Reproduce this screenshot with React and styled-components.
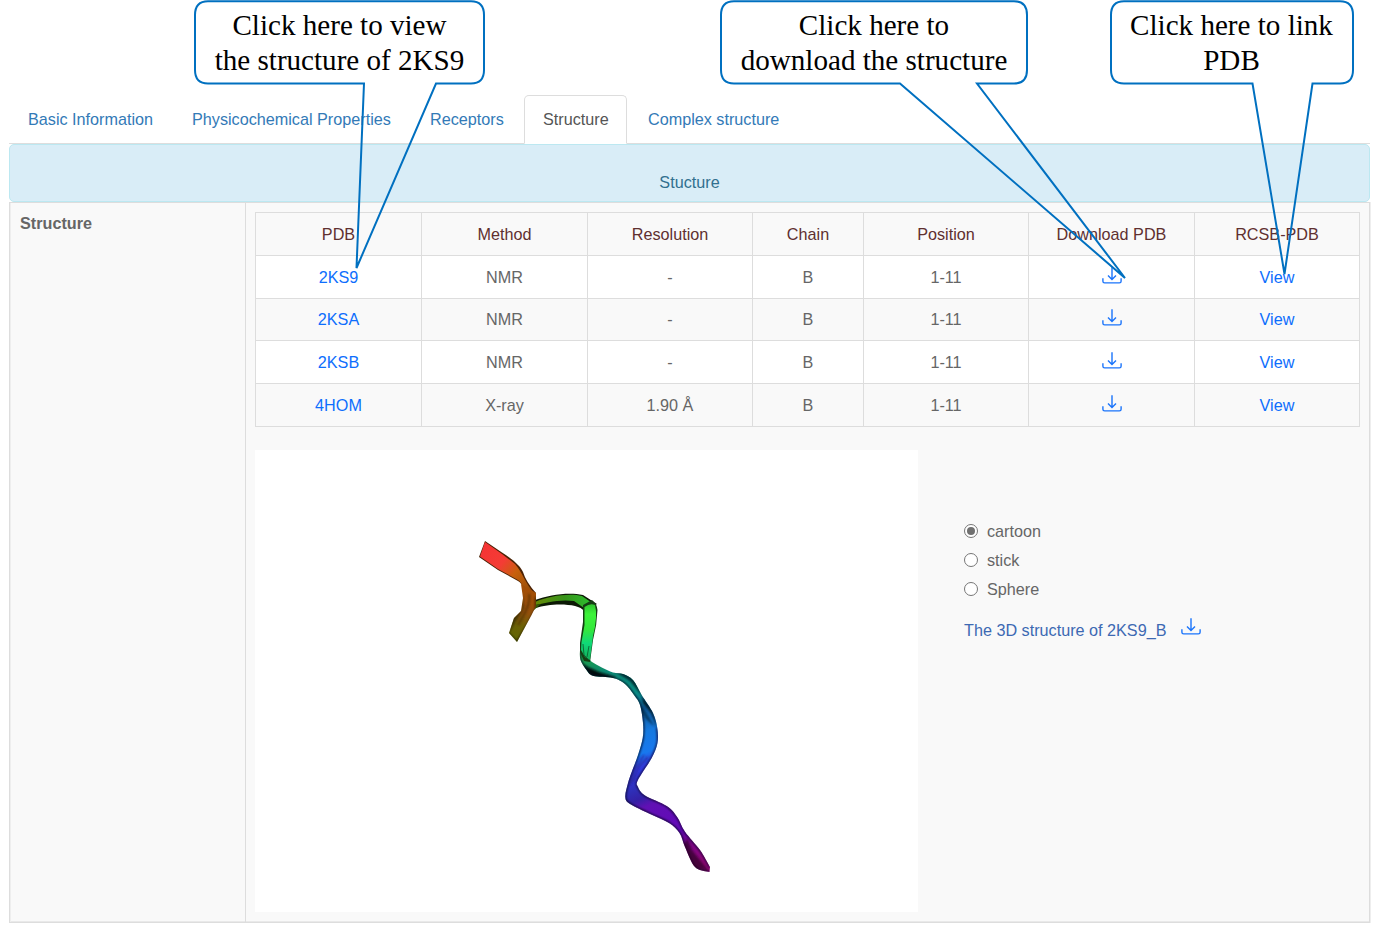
import React from 'react';
import styled, { createGlobalStyle } from 'styled-components';

const GlobalStyle = createGlobalStyle`
  * { box-sizing: border-box; }
  body {
    margin: 0;
    background: #fff;
    font-family: "Liberation Sans", Arial, sans-serif;
    font-size: 16.2px;
    color: #666;
  }
`;

const Page = styled.div`
  position: relative;
  width: 1377px;
  height: 937px;
  overflow: hidden;
  padding: 95px 7px 0 9px;
`;

const Tabs = styled.nav`
  display: flex;
  height: 49px;
  border-bottom: 1px solid #ddd;
`;

const Tab = styled.a`
  height: 49px;
  margin-right: 2px;
  padding: 0 18px;
  line-height: 47px;
  white-space: nowrap;
  text-align: center;
  width: ${(p) => p.$width}px;
  color: ${(p) => (p.$active ? '#555' : '#337ab7')};
  background: ${(p) => (p.$active ? '#fff' : 'transparent')};
  border: 1px solid ${(p) => (p.$active ? '#ddd' : 'transparent')};
  border-bottom-color: ${(p) => (p.$active ? '#fff' : 'transparent')};
  border-radius: 5px 5px 0 0;
`;

const Banner = styled.header`
  height: 58px;
  padding-top: 28px;
  line-height: 19px;
  text-align: center;
  color: #31708f;
  background: #d9edf7;
  border: 1px solid #bce8f1;
  border-radius: 5px;
`;

const Panel = styled.section`
  display: flex;
  height: 721px;
  background: #f9f9f9;
  border: 1px solid #ddd;
  box-shadow: inset 1px 0 #eee, inset 0 -1px #e9e9e9, 1px 0 #eee;
`;

const PanelLabel = styled.div`
  width: 236px;
  padding: 11px 10px;
  line-height: 19px;
  font-weight: 700;
  border-right: 1px solid #ddd;
`;

const PanelBody = styled.div`
  flex: 1;
  padding: 9px 9px 0 9px;
`;

const Table = styled.div`
  width: 1105px;
  border: solid #ddd;
  border-width: 1px 0 0 1px;
`;

const Row = styled.div`
  display: grid;
  grid-template-columns: 166px 166px 165px 111px 165px 166px 165px;
  height: ${(p) => p.$height}px;
  background: ${(p) => (p.$white ? '#fff' : '#f9f9f9')};
  color: ${(p) => (p.$head ? '#5f3030' : 'inherit')};
`;

const Cell = styled.div`
  display: flex;
  align-items: center;
  justify-content: center;
  border: solid #ddd;
  border-width: 0 1px 1px 0;
`;

const Link = styled.a`
  color: #0d6efd;
`;

const TrayIcon = styled.svg`
  display: block;
  width: 20px;
  height: 17px;
  fill: none;
  stroke: #1a74fb;
  stroke-width: 1.4;
  margin-bottom: 4px;
`;

const ViewerArea = styled.div`
  display: flex;
  margin-top: 23px;
`;

const Viewer = styled.div`
  width: 663px;
  height: 462px;
  background: #fff;

  svg { display: block; }
`;

const Controls = styled.div`
  padding: 67px 0 0 46px;
`;

const Option = styled.label`
  display: flex;
  align-items: center;
  height: 29px;
`;

const Radio = styled.span`
  display: grid;
  place-items: center;
  width: 14px;
  height: 14px;
  margin: 0 9px 2px 0;
  border: 1px solid #767676;
  border-radius: 50%;
  background: #fff;

  &::after {
    content: '';
    width: 8px;
    height: 8px;
    border-radius: 50%;
    background: ${(p) => (p.$on ? '#707070' : 'transparent')};
  }
`;

const Download = styled.a`
  display: flex;
  align-items: center;
  gap: 15px;
  height: 24px;
  margin-top: 14px;
  color: #3d69b3;

  svg { margin-bottom: 7px; }
`;

const Callout = styled.div`
  position: absolute;
  top: 0;
  left: ${(p) => p.$left}px;
  width: ${(p) => p.$width}px;
  padding-top: 8px;
  text-align: center;
  white-space: nowrap;
  font: 29.1px/35px "Liberation Serif", "Times New Roman", serif;
  color: #000;
`;

const Outline = styled.svg`
  position: absolute;
  top: 0;
  left: 0;
  overflow: visible;
  fill: none;
  stroke: #0070c0;
  stroke-width: 2;
`;

function DownloadIcon() {
  return (
    <TrayIcon viewBox="0 0 20 17">
      <path d="M.9 11.3v2.9q0 1.7 1.7 1.7h14.8q1.7 0 1.7-1.7v-2.9M10 .3v12M6 8.5l4 4 4-4" />
    </TrayIcon>
  );
}

function Bubble({ left, width, tail, children }) {
  const [a, b, tipX, tipY] = tail.map((v, i) => (i < 3 ? v - left : v));
  const r = width - 1;
  return (
    <Callout $left={left} $width={width}>
      <Outline width={width} height="84">
        <path
          strokeLinejoin="miter"
          strokeMiterlimit="3"
          d={`M${a} 83.5H14Q1 83.5 1 70V15Q1 1.2 14 1.2H${r - 13}Q${r} 1.2 ${r} 15V70Q${r} 83.5 ${r - 13} 83.5H${b}L${tipX} ${tipY}Z`}
        />
      </Outline>
      {children}
    </Callout>
  );
}

// Smooth cubic path through a list of points.
function curve(points) {
  let d = `M${points[0].join(' ')}`;
  for (let i = 0; i < points.length - 1; i += 1) {
    const p0 = points[Math.max(i - 1, 0)];
    const p1 = points[i];
    const p2 = points[i + 1];
    const p3 = points[Math.min(i + 2, points.length - 1)];
    const c1 = [p1[0] + (p2[0] - p0[0]) / 6, p1[1] + (p2[1] - p0[1]) / 6];
    const c2 = [p2[0] - (p3[0] - p1[0]) / 6, p2[1] - (p3[1] - p1[1]) / 6];
    d += `C${c1.join(' ')} ${c2.join(' ')} ${p2.join(' ')}`;
  }
  return d;
}

const CHAIN_RIGHT = [
  [588, 652], [590, 660], [599, 666], [613, 672.5], [623, 674], [633, 680], [641.7, 695],
  [653, 713], [657.3, 728], [657.5, 743], [651.7, 758], [638, 780], [638, 787], [645, 795.5],
  [666.7, 806], [677, 816.7], [685, 831.7], [700, 850], [710, 867],
];

const CHAIN_LEFT = [
  [709.5, 872], [695, 867], [685, 847], [679.5, 833], [669, 823], [650, 814], [630, 804],
  [625.3, 797], [628, 783], [631.7, 772], [638, 755], [642.7, 738], [643, 723], [640, 705],
  [634, 695], [625, 684], [613, 678], [593, 675.7], [586.5, 670], [580.5, 660], [580, 650],
];

const CHAIN = `${curve(CHAIN_RIGHT)}${curve(CHAIN_LEFT).replace('M', 'L')}Z`;

function Ribbon() {
  return (
    <svg width="663" height="462" viewBox="255 450 663 462">
      <defs>
        <linearGradient id="red" gradientUnits="userSpaceOnUse" x1="481" y1="549" x2="534" y2="594">
          <stop offset="0" stopColor="#f53434" />
          <stop offset=".36" stopColor="#f43c35" />
          <stop offset=".6" stopColor="#c7600c" />
          <stop offset="1" stopColor="#8b4a08" />
        </linearGradient>
        <linearGradient id="olive" gradientUnits="userSpaceOnUse" x1="530" y1="590" x2="514" y2="638">
          <stop offset="0" stopColor="#a34e06" />
          <stop offset=".45" stopColor="#91500b" />
          <stop offset=".72" stopColor="#6c6005" />
          <stop offset="1" stopColor="#626603" />
        </linearGradient>
        <linearGradient id="arch" gradientUnits="userSpaceOnUse" x1="535" y1="602" x2="595" y2="602">
          <stop offset="0" stopColor="#668a08" />
          <stop offset=".5" stopColor="#37941a" />
          <stop offset="1" stopColor="#2bc532" />
        </linearGradient>
        <linearGradient id="down" gradientUnits="userSpaceOnUse" x1="0" y1="602" x2="0" y2="663">
          <stop offset="0" stopColor="#2bb92b" />
          <stop offset=".2" stopColor="#3df43a" />
          <stop offset=".45" stopColor="#34e83c" />
          <stop offset=".68" stopColor="#0fd878" />
          <stop offset="1" stopColor="#16a451" />
        </linearGradient>
        <linearGradient id="chain" gradientUnits="userSpaceOnUse" x1="586" y1="655" x2="682" y2="871">
          <stop offset="0" stopColor="#1d9f45" />
          <stop offset=".1" stopColor="#0b8874" />
          <stop offset=".23" stopColor="#089188" />
          <stop offset=".31" stopColor="#0e5c99" />
          <stop offset=".4" stopColor="#1679df" />
          <stop offset=".48" stopColor="#1878ee" />
          <stop offset=".53" stopColor="#323bdf" />
          <stop offset=".61" stopColor="#2f2db5" />
          <stop offset=".65" stopColor="#3420a5" />
          <stop offset=".69" stopColor="#6110b4" />
          <stop offset=".84" stopColor="#6208b8" />
          <stop offset=".9" stopColor="#7c058b" />
          <stop offset="1" stopColor="#8d0676" />
        </linearGradient>
        <filter id="soft" x="-10%" y="-10%" width="120%" height="120%">
          <feGaussianBlur stdDeviation=".8" />
        </filter>
        <clipPath id="chainShape">
          <path d={CHAIN} />
        </clipPath>
        <clipPath id="bendShape">
          <path d="M521 584L536 593L536 606L531 616L517 642L509 633L514 618L521 611L523 598Z" />
        </clipPath>
      </defs>

      <path fill="#0c1905" d="M535 600C549 595 568 592 583 595L597 604L584 611C579 603 550 603 536 608Z" />
      <path fill="url(#arch)" d="M535 602C549 596 569 593 582 596L595 605L584 608L574 601C559 599 545 603 535 605Z" />
      <path fill="#315b08" d="M536 605L541 604L534 610L531 612Z" />

      <path fill="#4b2205" d="M485 541L502 552.500C514 560 521 567 523 572Q526 582 536 593L533 602C526 596 523 583 518 581L498 570L479 557Z" />
      <path fill="url(#red)" d="M485 542L502 554L515 564C523 573 525 583 534 593L530 599C525 593 523 583 518 580L498 569L480 556.500Z" />
      <path fill="url(#olive)" d="M521 584L536 593L536 606L531 616L517 642L509 633L514 618L521 611L523 598Z" />
      <g clipPath="url(#bendShape)">
        <g filter="url(#soft)">
          <path d="M523 594L524 608L514 624L509 633L509 620L522 609Z" fill="#241a02" opacity=".65" />
          <path d="M529 594C531 604 524 615 518 625" fill="none" stroke="#4a2803" strokeWidth="1.200" />
          <path d="M536 597L536 609L528 624L517 642L508 633" fill="none" stroke="#171002" strokeWidth="1.400" />
        </g>
      </g>

      <path fill="url(#chain)" d={CHAIN} />
      <g clipPath="url(#chainShape)">
        <g filter="url(#soft)">
          <path d="M580 662L588 667L599 672L616 677L610 681L590 680Z" fill="#000b0a" />
          <path d="M614 671L625 671L637 682L643 697L630 681Z" fill="#032f34" />
          <path d="M642 695L653 711L659 732L651 713L643 703Z" fill="#041a2c" />
          <path d="M636 697L642 706L655 727L646 719L641 709Z" fill="#062a4a" opacity=".75" />
          <path d={curve(CHAIN_LEFT)} stroke="#090a22" strokeWidth="1.800" fill="none" />
          <path d={curve(CHAIN_RIGHT.slice(8))} stroke="#120a2c" strokeWidth="1.700" fill="none" />
          <path d="M644 755L634 770L630 785M648 757L638 768L633 782" stroke="#2a2191" strokeWidth="1.200" fill="none" />
          <path d="M687 838L692 850L708 870L694 867L684 846Z" fill="#24051d" opacity=".65" />
        </g>
      </g>

      <path fill="#153e13" d="M583 605L592 600Q597 604 597.500 610Q597 625 593 640L590 662L584 661L580 652L580 643L583 622Z" />
      <path fill="url(#down)" d="M584.500 607Q590 603 595 605Q598 616 593 636L590 660L585 657L581 650L581.500 642L584.500 625Z" />
      <path d="M583 644L584 655L589 660M589 646L587 657" stroke="#0b6332" strokeWidth=".9" fill="none" />
    </svg>
  );
}

const TABS = [
  ['Basic Information', 162],
  ['Physicochemical Properties', 236],
  ['Receptors', 111],
  ['Structure', 103],
  ['Complex structure', 168],
];

const HEADINGS = ['PDB', 'Method', 'Resolution', 'Chain', 'Position', 'Download PDB', 'RCSB-PDB'];

const ENTRIES = [
  { id: '2KS9', method: 'NMR', resolution: '-', height: 43 },
  { id: '2KSA', method: 'NMR', resolution: '-', height: 42 },
  { id: '2KSB', method: 'NMR', resolution: '-', height: 43 },
  { id: '4HOM', method: 'X-ray', resolution: '1.90 Å', height: 43 },
];

export default function App() {
  return (
    <Page>
      <GlobalStyle />
      <Tabs>
        {TABS.map(([name, width]) => (
          <Tab key={name} $width={width} $active={name === 'Structure'}>{name}</Tab>
        ))}
      </Tabs>
      <Banner>Stucture</Banner>
      <Panel>
        <PanelLabel>Structure</PanelLabel>
        <PanelBody>
          <Table>
            <Row $head $height={43}>
              {HEADINGS.map((h) => <Cell key={h}>{h}</Cell>)}
            </Row>
            {ENTRIES.map((e, i) => (
              <Row key={e.id} $height={e.height} $white={i % 2 === 0}>
                <Cell><Link>{e.id}</Link></Cell>
                <Cell>{e.method}</Cell>
                <Cell>{e.resolution}</Cell>
                <Cell>B</Cell>
                <Cell>1-11</Cell>
                <Cell><DownloadIcon /></Cell>
                <Cell><Link>View</Link></Cell>
              </Row>
            ))}
          </Table>
          <ViewerArea>
            <Viewer><Ribbon /></Viewer>
            <Controls>
              {['cartoon', 'stick', 'Sphere'].map((name) => (
                <Option key={name}><Radio $on={name === 'cartoon'} />{name}</Option>
              ))}
              <Download>The 3D structure of 2KS9_B<DownloadIcon /></Download>
            </Controls>
          </ViewerArea>
        </PanelBody>
      </Panel>

      <Bubble left={194} width={291} tail={[364, 436, 356.5, 268]}>
        Click here to view<br />the structure of 2KS9
      </Bubble>
      <Bubble left={720} width={308} tail={[900, 977, 1125, 278]}>
        Click here to<br />download the structure
      </Bubble>
      <Bubble left={1109.500} width={244} tail={[1252, 1312, 1284, 274]}>
        Click here to link<br />PDB
      </Bubble>
    </Page>
  );
}
